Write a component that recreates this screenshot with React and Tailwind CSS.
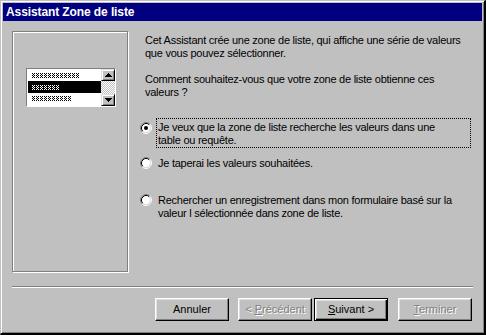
import React from 'react';

// tiny "xxxx" glyph pattern used in the listbox sketch
function XRow({ n, id, color }) {
  const cells = [[0, 0], [2, 0], [1, 1], [0, 2], [2, 2], [1, 3], [0, 4], [2, 4]];
  return (
    <svg width={n * 4} height={5} className="block" shapeRendering="crispEdges">
      <defs>
        <pattern id={id} width="4" height="5" patternUnits="userSpaceOnUse">
          {cells.map(([x, y]) => (
            <rect key={`${x}-${y}`} x={x} y={y} width="1" height="1" fill={color} />
          ))}
        </pattern>
      </defs>
      <rect width={n * 4} height={5} fill={`url(#${id})`} />
    </svg>
  );
}

function Radio({ checked }) {
  return (
    <svg width="12" height="12" viewBox="0 0 12 12" className="shrink-0 block">
      <circle cx="6" cy="6" r="4.5" fill="#fff" />
      <path d="M2.11 9.89A5.5 5.5 0 0 1 9.89 2.11" stroke="#808080" fill="none" />
      <path d="M9.89 2.11A5.5 5.5 0 0 1 2.11 9.89" stroke="#fff" fill="none" />
      <path d="M2.82 9.18A4.5 4.5 0 0 1 9.18 2.82" stroke="#000" fill="none" />
      <path d="M9.18 2.82A4.5 4.5 0 0 1 2.82 9.18" stroke="#dfdfdf" fill="none" />
      {checked && <circle cx="6" cy="6" r="2" fill="#000" />}
    </svg>
  );
}

function ScrollBtn({ up }) {
  return (
    <div className="h-[12px] flex items-center justify-center bg-[#c0c0c0] border border-t-[#dfdfdf] border-l-[#dfdfdf] border-r-black border-b-black shadow-[inset_1px_1px_0_#fff,inset_-1px_-1px_0_#808080]">
      <svg width="7" height="4" viewBox="0 0 7 4" shapeRendering="crispEdges">
        <polygon points={up ? '3.5,0 7,4 0,4' : '0,0 7,0 3.5,4'} fill="#000" />
      </svg>
    </div>
  );
}

const btn =
  'h-[23px] w-[74px] flex items-center justify-center bg-[#c0c0c0] border border-t-white border-l-white border-r-black border-b-black shadow-[inset_-1px_-1px_0_#808080,inset_1px_1px_0_#dfdfdf]';
const disabled = 'text-[#808080] [text-shadow:1px_1px_0_#fff]';

export default function App() {
  return (
    <div className="w-[486px] h-[335px] bg-[#c0c0c0] border-t border-l border-r-2 border-b-2 border-t-[#c0c0c0] border-l-[#c0c0c0] border-r-black border-b-black shadow-[inset_1px_1px_0_#fff,inset_-1px_-1px_0_#808080] p-[2px] flex flex-col font-['Liberation_Sans',Arial,sans-serif] text-[11px] leading-[13px] tracking-[-0.25px] text-black">
      {/* Title bar */}
      <div className="h-[18px] shrink-0 bg-[#000080] text-white font-bold text-[12px] leading-[18px] tracking-[-0.1px] pl-[3px]">
        Assistant Zone de liste
      </div>

      {/* Body */}
      <div className="flex mt-[10px] pl-[9px]">
        {/* Picture frame */}
        <div className="w-[116px] h-[241px] shrink-0 border border-[#808080] shadow-[inset_1px_1px_0_#fff,1px_1px_0_#fff] pl-[13px] pt-[36px]">
          <div className="w-[90px] h-[39px] bg-white border border-t-[#808080] border-l-[#808080] border-r-white border-b-white flex">
            <div className="flex-1 pl-[1px] pt-[1px]">
              <div className="h-[11px] flex items-center pl-[4px]">
                <XRow n={12} id="xr1" color="#000" />
              </div>
              <div className="h-[12px] flex items-center pl-[4px] bg-black">
                <XRow n={7} id="xr2" color="#fff" />
              </div>
              <div className="h-[11px] flex items-center pl-[4px]">
                <XRow n={10} id="xr3" color="#000" />
              </div>
            </div>
            <div className="w-[14px] flex flex-col">
              <ScrollBtn up />
              <div className="flex-1 bg-[repeating-conic-gradient(#c0c0c0_0%_25%,#fff_0%_50%)] bg-[length:2px_2px]" />
              <ScrollBtn />
            </div>
          </div>
        </div>

        {/* Text column */}
        <div className="ml-[12px] pt-[3px] flex flex-col">
          <p className="pl-[5px] whitespace-nowrap">
            Cet Assistant crée une zone de liste, qui affiche une série de valeurs
            <br />
            que vous pouvez sélectionner.
          </p>
          <p className="pl-[5px] mt-[13px] whitespace-nowrap">
            Comment souhaitez-vous que votre zone de liste obtienne ces
            <br />
            valeurs ?
          </p>

          <div className="flex items-start mt-[19px]">
            <div className="mt-[4px]">
              <Radio checked />
            </div>
            <div className="ml-[4px] w-[315px] border border-dotted border-black px-[1px] pt-[2px] whitespace-nowrap">
              Je veux que la zone de liste recherche les valeurs dans une
              <br />
              table ou requête.
            </div>
          </div>

          <div className="flex items-start mt-[5px]">
            <div className="mt-[4px]">
              <Radio />
            </div>
            <div className="ml-[4px] border border-transparent px-[1px] pt-[3px] whitespace-nowrap">
              Je taperai les valeurs souhaitées.
            </div>
          </div>

          <div className="flex items-start mt-[19px]">
            <div className="mt-[4px]">
              <Radio />
            </div>
            <div className="ml-[4px] border border-transparent px-[1px] pt-[3px] whitespace-nowrap">
              Rechercher un enregistrement dans mon formulaire basé sur la
              <br />
              valeur l sélectionnée dans zone de liste.
            </div>
          </div>
        </div>
      </div>

      {/* Separator */}
      <div className="ml-[9px] mt-[14px] w-[461px] h-[2px] border-t border-t-[#808080] border-b border-b-white" />

      {/* Buttons */}
      <div className="flex mt-[10px] pl-[152px] tracking-normal">
        <div className={btn}>Annuler</div>
        <div className={`${btn} ml-[9px] ${disabled}`}>
          <span>
            &lt; <u>P</u>récédent
          </span>
        </div>
        <div className="h-[23px] w-[74px] ml-[2px] flex items-center justify-center bg-[#c0c0c0] border border-black shadow-[inset_1px_1px_0_#fff,inset_-1px_-1px_0_#000,inset_-2px_-2px_0_#808080,inset_2px_2px_0_#dfdfdf]">
          <span>
            <u>S</u>uivant &gt;
          </span>
        </div>
        <div className={`${btn} ml-[10px] ${disabled}`}>
          <span>
            <u>T</u>erminer
          </span>
        </div>
      </div>
    </div>
  );
}
